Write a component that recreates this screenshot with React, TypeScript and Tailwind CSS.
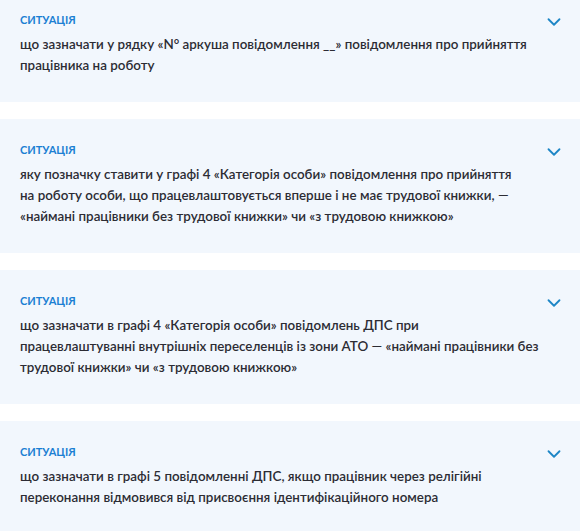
import { ChevronDown } from 'lucide-react';

// Lines are split as in the source page — its font wraps differently from Lato.
const items = [
  [
    'що зазначати у рядку «N° аркуша повідомлення __» повідомлення про прийняття',
    'працівника на роботу',
  ],
  [
    'яку позначку ставити у графі 4 «Категорія особи» повідомлення про прийняття',
    'на роботу особи, що працевлаштовується вперше і не має трудової книжки, —',
    '«наймані працівники без трудової книжки» чи «з трудовою книжкою»',
  ],
  [
    'що зазначати в графі 4 «Категорія особи» повідомлень ДПС при',
    'працевлаштуванні внутрішніх переселенців із зони АТО — «наймані працівники без',
    'трудової книжки» чи «з трудовою книжкою»',
  ],
  [
    'що зазначати в графі 5 повідомленні ДПС, якщо працівник через релігійні',
    'переконання відмовився від присвоєння ідентифікаційного номера',
  ],
];

function Situation({ lines }: { lines: string[] }) {
  return (
    <div className="flex bg-[#f2f7fd] pl-5 pr-[15px] pt-[25px] pb-[26px]">
      <div className="w-[525px]">
        <div className="text-[11px] font-bold uppercase leading-[12px] text-[#1b7fd3]">
          Ситуація
        </div>
        <p className="mt-[8px] text-[13.4px] font-semibold leading-[21px] text-[#2c2c34]">
          {lines.map((l) => (
            <span key={l} className="block whitespace-nowrap">
              {l}
            </span>
          ))}
        </p>
      </div>
      <div className="flex flex-1 justify-end">
        <ChevronDown className="mt-[-3px] h-[22px] w-[22px] text-[#1d86c6]" strokeWidth={2} />
      </div>
    </div>
  );
}

export default function App() {
  return (
    <div className="h-[531px] overflow-hidden bg-white font-['Lato','Open_Sans',sans-serif]">
      <div className="-mt-[11px] flex flex-col gap-[17px]">
        {items.map((l) => (
          <Situation key={l[0]} lines={l} />
        ))}
      </div>
    </div>
  );
}
